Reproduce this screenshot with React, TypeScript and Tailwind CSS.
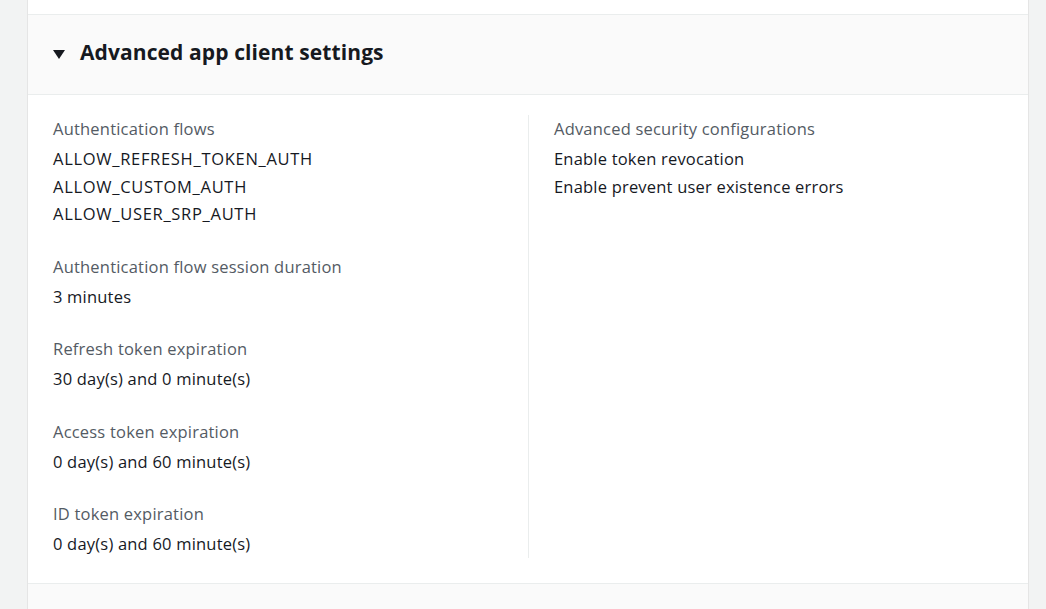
import { Fragment } from "react";

const leftGroups = [
  {
    label: "Authentication flows",
    values: ["ALLOW_REFRESH_TOKEN_AUTH", "ALLOW_CUSTOM_AUTH", "ALLOW_USER_SRP_AUTH"],
    caps: true,
  },
  { label: "Authentication flow session duration", values: ["3 minutes"] },
  { label: "Refresh token expiration", values: ["30 day(s) and 0 minute(s)"] },
  { label: "Access token expiration", values: ["0 day(s) and 60 minute(s)"] },
  { label: "ID token expiration", values: ["0 day(s) and 60 minute(s)"] },
];

const rightGroups = [
  {
    label: "Advanced security configurations",
    values: ["Enable token revocation", "Enable prevent user existence errors"],
    caps: false,
  },
];

function Group({ label, values, caps }: { label: string; values: string[]; caps?: boolean }) {
  return (
    <div>
      <div className="text-[#545b64] leading-[28px] mb-[2px]">{label}</div>
      {values.map((v) => (
        <Fragment key={v}>
          <div
            className={`text-[#16191f] leading-[27.5px] ${caps ? "tracking-[0.7px]" : ""}`}
          >
            {v}
          </div>
        </Fragment>
      ))}
    </div>
  );
}

export default function App() {
  return (
    <div
      className="h-[609px] w-[1046px] overflow-hidden bg-[#f2f3f3] pl-[27px] pr-[17px] text-[16.5px] tracking-[0.2px]"
      style={{ fontFamily: '"Open Sans", "Noto Sans", Arial, sans-serif' }}
    >
      <div className="h-full border-x border-[#e5e5e5] bg-white">
        <div className="h-[15px] border-b border-[#eaeded] bg-white" />
        <div className="flex h-[80px] items-center gap-[15px] border-b border-[#eaeded] bg-[#fafafa] pb-[3px] pl-[25px]">
          <svg width="12" height="10" viewBox="0 0 12 10" className="mt-[1px]">
            <polygon points="0,1 12,1 6,10" fill="#16191f" />
          </svg>
          <h2 className="text-[21px] font-bold tracking-[0.1px] text-[#16191f]">
            Advanced app client settings
          </h2>
        </div>
        <div className="flex border-b border-[#eaeded] bg-white pt-[20px] pb-[25px]">
          <div className="flex w-[501px] flex-col gap-[25px] border-r border-[#eaeded] pl-[25px]">
            {leftGroups.map((g) => (
              <Group key={g.label} label={g.label} values={g.values} caps={g.caps} />
            ))}
          </div>
          <div className="flex flex-1 flex-col gap-[25px] pl-[25px]">
            {rightGroups.map((g) => (
              <Group key={g.label} label={g.label} values={g.values} caps={g.caps} />
            ))}
          </div>
        </div>
        <div className="h-[40px] bg-[#fafafa]" />
      </div>
    </div>
  );
}
